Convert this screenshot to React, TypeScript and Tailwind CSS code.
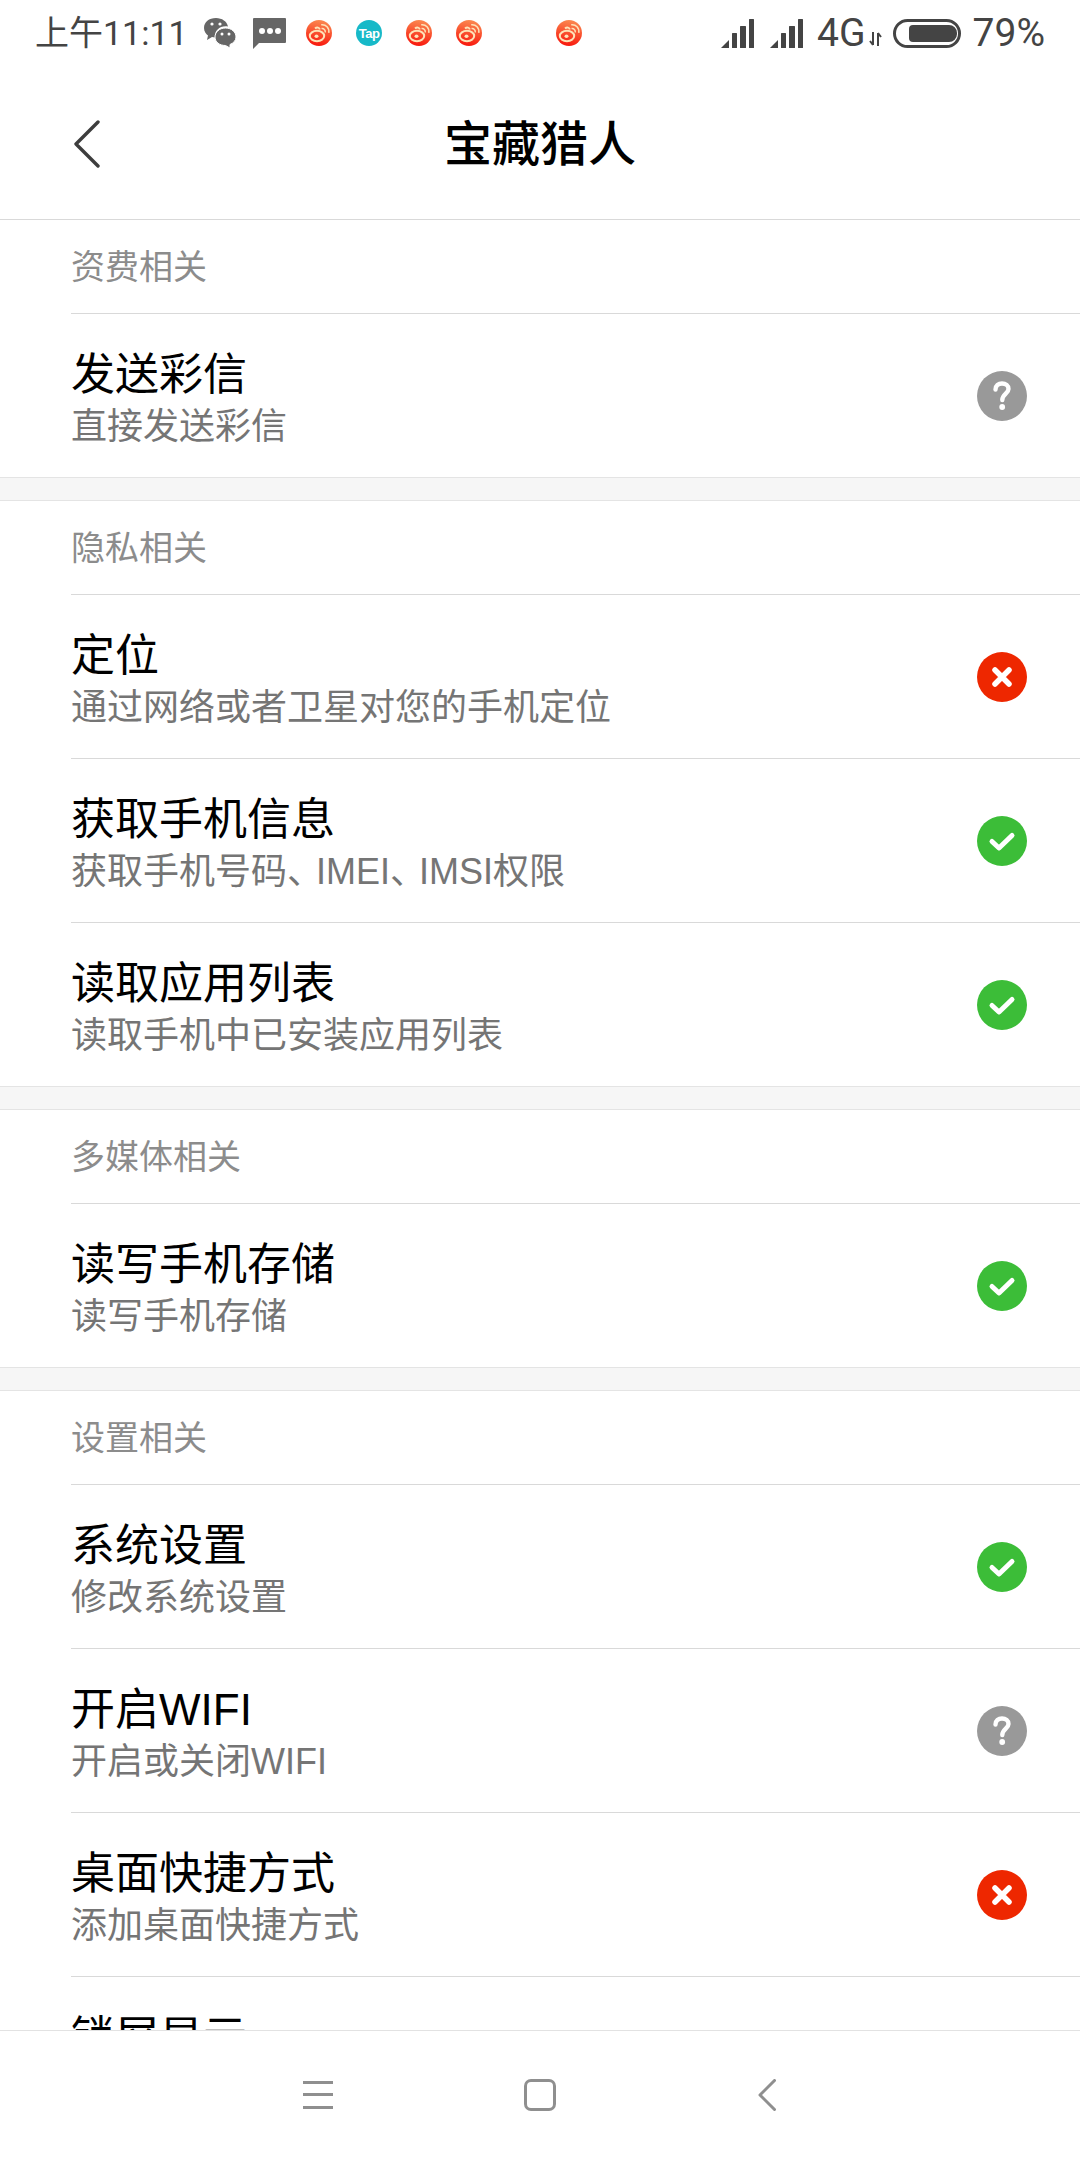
import React from "react";

type Status = "q" | "x" | "ok";
type Item = { title: string; sub: string; status: Status };
type Section = { name: string; items: Item[] };

const sections: Section[] = [
  { name: "资费相关", items: [{ title: "发送彩信", sub: "直接发送彩信", status: "q" }] },
  {
    name: "隐私相关",
    items: [
      { title: "定位", sub: "通过网络或者卫星对您的手机定位", status: "x" },
      { title: "获取手机信息", sub: "获取手机号码、IMEI、IMSI权限", status: "ok" },
      { title: "读取应用列表", sub: "读取手机中已安装应用列表", status: "ok" },
    ],
  },
  { name: "多媒体相关", items: [{ title: "读写手机存储", sub: "读写手机存储", status: "ok" }] },
  {
    name: "设置相关",
    items: [
      { title: "系统设置", sub: "修改系统设置", status: "ok" },
      { title: "开启WIFI", sub: "开启或关闭WIFI", status: "q" },
      { title: "桌面快捷方式", sub: "添加桌面快捷方式", status: "x" },
      { title: "锁屏显示", sub: "锁屏显示", status: "ok" },
    ],
  },
];

function StatusIcon({ status }: { status: Status }) {
  if (status === "ok")
    return (
      <svg viewBox="0 0 50 50" className="w-[50px] h-[50px] shrink-0">
        <circle cx="25" cy="25" r="25" fill="#3cbd38" />
        <path d="M15 25.5 L22 32 L35 19.5" fill="none" stroke="#fff" strokeWidth="5" strokeLinecap="round" strokeLinejoin="round" />
      </svg>
    );
  if (status === "x")
    return (
      <svg viewBox="0 0 50 50" className="w-[50px] h-[50px] shrink-0">
        <circle cx="25" cy="25" r="25" fill="#ee2700" />
        <path d="M18 18 L32 32 M32 18 L18 32" fill="none" stroke="#fff" strokeWidth="5.5" strokeLinecap="round" />
      </svg>
    );
  return (
    <svg viewBox="0 0 50 50" className="w-[50px] h-[50px] shrink-0">
      <circle cx="25" cy="25" r="25" fill="#999999" />
      <path d="M18.5 18.5 C18.5 14.5 21.5 12.5 25 12.5 C28.7 12.5 31.5 14.8 31.5 18 C31.5 22.5 25.3 23 25.3 29" fill="none" stroke="#fff" strokeWidth="4.4" strokeLinecap="round" />
      <circle cx="25.2" cy="36" r="2.9" fill="#fff" />
    </svg>
  );
}

function Weibo({ id }: { id: string }) {
  return (
    <svg viewBox="0 0 26 26" className="w-[26px] h-[26px] shrink-0">
      <defs>
        <linearGradient id={id} x1="0.6" y1="0" x2="0.4" y2="1">
          <stop offset="0" stopColor="#fb8a50" />
          <stop offset="1" stopColor="#f8160c" />
        </linearGradient>
      </defs>
      <circle cx="13" cy="13" r="13" fill={`url(#${id})`} />
      <ellipse cx="11" cy="16" rx="7.2" ry="5.2" fill="none" stroke="#fde3b8" strokeWidth="2" />
      <ellipse cx="10.5" cy="16.3" rx="2" ry="1.7" fill="#fde3b8" />
      <path d="M9 8.5 C11 6.8 13.5 7.5 13.8 9.5" fill="none" stroke="#fde3b8" strokeWidth="2" />
      <path d="M15.5 8.5 C18 8.2 19.5 10 19.3 12.5 M15.2 4.8 C20 4.2 23.5 8 22.8 12.8" fill="none" stroke="#fde3b8" strokeWidth="1.5" />
      <path d="M21 26 L26 20 L26 26 Z" fill="#fff" />
    </svg>
  );
}

function Signal() {
  return (
    <svg viewBox="0 0 33 29" className="w-[33px] h-[29px] shrink-0" fill="#444444">
      <path d="M0 29 L8 21 L8 29 Z" />
      <rect x="11" y="14" width="5" height="15" rx="0.5" />
      <rect x="19" y="7" width="6" height="22" rx="0.5" />
      <rect x="28" y="0" width="5" height="29" rx="0.5" />
    </svg>
  );
}

function Sub({ text }: { text: string }) {
  const parts = text.split("、");
  return (
    <div className="text-[36px] leading-[46px] mt-[4px] text-[#757575] whitespace-nowrap">
      {parts.map((p, i) => (
        <React.Fragment key={i}>
          {p}
          {i < parts.length - 1 && <span className="tracking-[-7px]">、</span>}
        </React.Fragment>
      ))}
    </div>
  );
}

function ListRow({ item }: { item: Item }) {
  return (
    <div className="ml-[71px] h-[164px] border-t border-[#d9d9d9] flex items-center justify-between pr-[53px]">
      <div className="flex flex-col pt-[8px]">
        <div className="text-[44px] leading-[50px] text-black whitespace-nowrap">{item.title}</div>
        <Sub text={item.sub} />
      </div>
      <StatusIcon status={item.status} />
    </div>
  );
}

export default function App() {
  return (
    <div
      className="w-[1080px] h-[2160px] bg-white flex flex-col overflow-hidden"
      style={{ fontFamily: '"Liberation Sans", "Noto Sans CJK SC", sans-serif' }}
    >
      {/* status bar */}
      <div className="h-[66px] shrink-0 flex items-center pl-[35px] pr-[35px] text-[#444444]">
        <div className="w-[168px] shrink-0 text-[34px] leading-[66px] whitespace-nowrap" style={{ fontFamily: 'Roboto, "Noto Sans CJK SC", sans-serif' }}>上午11:11</div>
        <svg viewBox="0 0 34 30" className="w-[34px] h-[30px] shrink-0" fill="#666666">
          <path d="M13 0 C6 0 1 4 1 10 C1 13.5 3 16 5 17.5 L4 22 L9 19 C10 19.3 11 19.4 12 19.4 C11 12 18 7 25 8.5 C24 3.5 19 0 13 0 Z" />
          <path d="M22.5 10 C16.5 10 12 14 12 19 C12 24 16.5 27.5 22.5 27.5 L27 30 L27 26.5 C30.5 25 33 22.5 33 19 C33 14 28.5 10 22.5 10 Z" stroke="#fff" strokeWidth="1" />
          <circle cx="9" cy="6" r="1.6" fill="#fff" />
          <circle cx="17" cy="6" r="1.6" fill="#fff" />
          <circle cx="19" cy="16" r="1.5" fill="#fff" />
          <circle cx="26" cy="16" r="1.5" fill="#fff" />
        </svg>
        <svg viewBox="0 0 33 31" className="w-[33px] h-[31px] ml-[16px] shrink-0" fill="#666666">
          <path d="M1 0 H32 A1 1 0 0 1 33 1 V24 A1 1 0 0 1 32 25 H6 L0 31 V1 A1 1 0 0 1 1 0 Z" />
          <circle cx="9" cy="13" r="3" fill="#fff" />
          <circle cx="17" cy="13" r="3" fill="#fff" />
          <circle cx="25" cy="13" r="3" fill="#fff" />
        </svg>
        <div className="ml-[20px] shrink-0"><Weibo id="w1" /></div>
        <div className="ml-[24px] w-[26px] h-[26px] rounded-full bg-[#17b9c8] shrink-0 flex items-center justify-center text-white text-[13px] leading-none font-bold tracking-[-0.5px]">Tap</div>
        <div className="ml-[24px] shrink-0"><Weibo id="w2" /></div>
        <div className="ml-[24px] shrink-0"><Weibo id="w3" /></div>
        <div className="ml-[74px] shrink-0"><Weibo id="w4" /></div>
        <div className="flex-1" />
        <Signal />
        <div className="ml-[16px]"><Signal /></div>
        <div className="ml-[14px] text-[39px] leading-[66px] whitespace-nowrap" style={{ fontFamily: 'Roboto, sans-serif' }}>4G</div>
        <svg viewBox="0 0 13 14" className="w-[13px] h-[14px] ml-[3px] mt-[12px] shrink-0" fill="none" stroke="#444444" strokeWidth="2">
          <path d="M4 0 V13 M1 9 L4 13 M9 14 V1 M12 5 L9 1" />
        </svg>
        <div className="ml-[11px] w-[68px] h-[29px] rounded-full border-[3px] border-[#444444] flex items-center px-[14px] shrink-0">
          <div className="w-[48px] h-[17px] rounded-[4px] rounded-r-[8px] bg-[#444444] -ml-[1px] shrink-0" />
        </div>
        <div className="ml-[12px] text-[39px] leading-[66px] whitespace-nowrap" style={{ fontFamily: 'Roboto, sans-serif' }}>79%</div>
      </div>

      {/* header */}
      <div className="h-[154px] shrink-0 border-b border-[#d9d9d9] relative flex items-start justify-center">
        <svg viewBox="0 0 26 48" className="absolute left-[74px] top-[54px] w-[26px] h-[48px]" fill="none" stroke="#3d3d3d" strokeWidth="3.4" strokeLinecap="round" strokeLinejoin="round">
          <path d="M24 2 L2 24 L24 46" />
        </svg>
        <div className="text-[48px] leading-[80px] mt-[39px] font-medium text-black whitespace-nowrap">宝藏猎人</div>
      </div>

      {/* content */}
      <div className="flex-1 min-h-0 overflow-hidden flex flex-col">
        {sections.map((s, i) => (
          <React.Fragment key={s.name}>
            {i > 0 && <div className="h-[24px] shrink-0 bg-[#f6f6f6] border-y border-[#e4e4e4]" />}
            <div className="shrink-0">
              <div className="h-[93px] pl-[71px] flex items-center text-[34px] leading-[44px] text-[#8c8c8c] pt-[1px]">{s.name}</div>
              {s.items.map((it) => (
                <ListRow key={it.title} item={it} />
              ))}
            </div>
          </React.Fragment>
        ))}
      </div>

      {/* bottom nav */}
      <div className="h-[130px] shrink-0 border-t border-[#e2e2e2] bg-white flex items-center pl-[303px] pb-[2px]">
        <div className="w-[30px] h-[28px] flex flex-col justify-between">
          <div className="h-[3px] bg-[#8f8f8f]" />
          <div className="h-[3px] bg-[#8f8f8f]" />
          <div className="h-[3px] bg-[#8f8f8f]" />
        </div>
        <div className="ml-[191px] w-[32px] h-[32px] rounded-[7px] border-[3px] border-[#8f8f8f]" />
        <svg viewBox="0 0 18 32" className="ml-[202px] w-[18px] h-[32px]" fill="none" stroke="#8f8f8f" strokeWidth="3" strokeLinecap="round" strokeLinejoin="round">
          <path d="M16.5 1.5 L2 16 L16.5 30.5" />
        </svg>
      </div>
    </div>
  );
}
